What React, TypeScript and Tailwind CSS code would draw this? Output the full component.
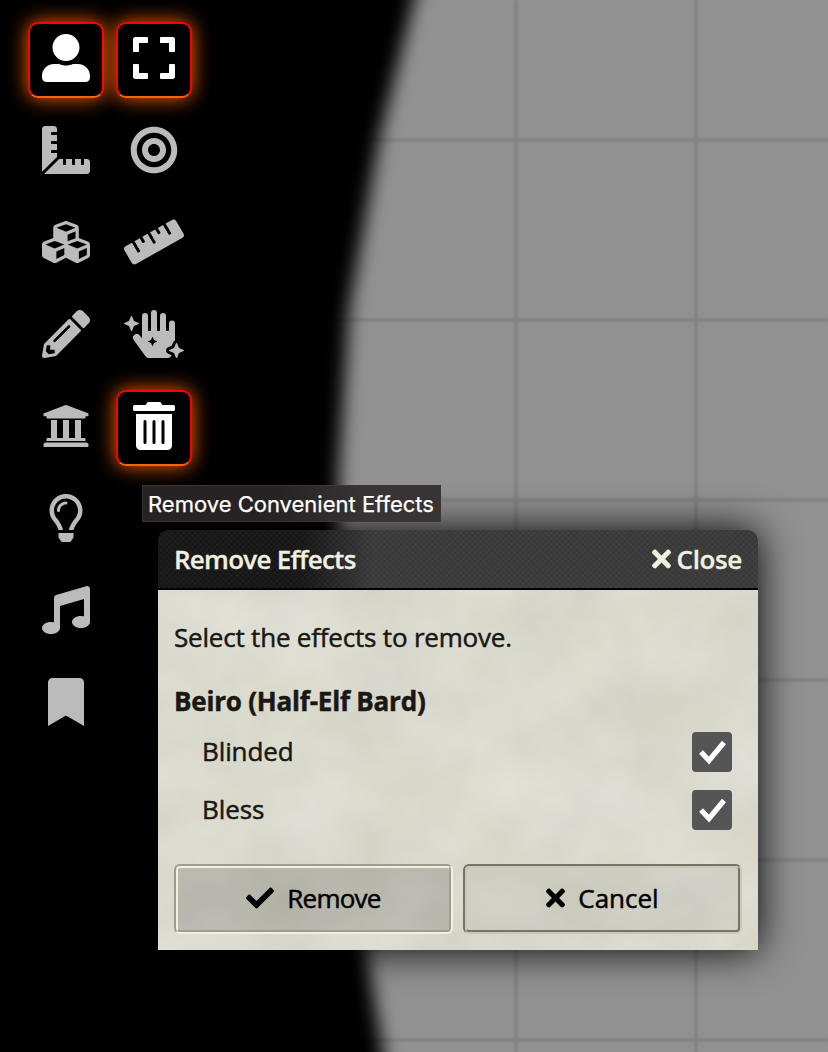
import React from "react";
import {
  FaUserAlt, FaExpand, FaRulerCombined, FaBullseye, FaCubes, FaRuler, FaPencilAlt,
  FaHandSparkles, FaUniversity, FaTrashAlt, FaRegLightbulb, FaMusic, FaBookmark,
  FaTimes, FaCheck,
} from "react-icons/fa";
import type { IconType } from "react-icons";

type Tool = { icon: IconType; label: string; active?: boolean; wide?: boolean };

const layers: Tool[] = [
  { icon: FaUserAlt, label: "Tokens", active: true },
  { icon: FaRulerCombined, label: "Measure" },
  { icon: FaCubes, label: "Tiles" },
  { icon: FaPencilAlt, label: "Drawings" },
  { icon: FaUniversity, label: "Walls" },
  { icon: FaRegLightbulb, label: "Lighting" },
  { icon: FaMusic, label: "Sounds" },
  { icon: FaBookmark, label: "Notes" },
];

const actions: Tool[] = [
  { icon: FaExpand, label: "Select", active: true },
  { icon: FaBullseye, label: "Target" },
  { icon: FaRuler, label: "Ruler", wide: true },
  { icon: FaHandSparkles, label: "Add effects", wide: true },
  { icon: FaTrashAlt, label: "Remove effects", active: true },
];

function ToolColumn({ tools }: { tools: Tool[] }) {
  return (
    <div className="flex flex-col gap-4">
      {tools.map(({ icon: Icon, label, active, wide }) => (
        <button
          key={label}
          aria-label={label}
          className={
            active
              ? "flex size-[76px] items-center justify-center rounded-[10px] border-2 border-[#ff0000] border-b-[#ff6400] bg-black pb-1 text-white shadow-[0_0_20px_#ff6400]"
              : "flex size-[76px] items-center justify-center border-2 border-transparent pb-1 text-[#bbbbbb]"
          }
        >
          <Icon className={wide ? "h-12 w-[60px] shrink-0" : "size-12 shrink-0"} />
        </button>
      ))}
    </div>
  );
}

function Scene() {
  return (
    <svg className="absolute inset-0" width="828" height="1052" viewBox="0 0 828 1052" aria-hidden="true">
      <defs>
        <filter id="soft" x="-10%" y="-10%" width="120%" height="120%">
          <feGaussianBlur stdDeviation="9" />
        </filter>
        <filter id="line" filterUnits="userSpaceOnUse" x="0" y="0" width="828" height="1052">
          <feGaussianBlur stdDeviation="0.8" />
        </filter>
      </defs>
      <rect width="828" height="1052" fill="#919191" />
      <g stroke="#000" strokeOpacity="0.11" strokeWidth="3.4" filter="url(#line)">
        <path d="M516 0V1052M696 0V1052M300 140H828M300 320H828M300 500H828M300 680H828M300 860H828M300 1040H828" />
      </g>
      <path
        d="M-60 -60H432L414 0L379 140L349 310L339 470L337 600L344 760L364 935L383 1052L396 1112H-60Z"
        fill="#000"
        filter="url(#soft)"
      />
    </svg>
  );
}

function Parchment() {
  return (
    <svg className="absolute inset-0 h-full w-full" aria-hidden="true">
      <filter id="paper" x="0" y="0" width="100%" height="100%" colorInterpolationFilters="sRGB">
        <feTurbulence type="fractalNoise" baseFrequency="0.011 0.012" numOctaves="6" seed="8" />
        <feColorMatrix values="0.08 0 0 0 0.817  0.08 0 0 0 0.813  0.09 0.03 0 0 0.748  0 0 0 0 1" />
      </filter>
      <rect width="100%" height="100%" filter="url(#paper)" />
    </svg>
  );
}

function EffectRow({ name }: { name: string }) {
  return (
    <label className="flex h-[58px] items-center justify-between pr-[10px] pl-7">
      <span className="-mt-0.5 tracking-[-0.1px]">{name}</span>
      <span className="flex size-10 items-center justify-center rounded bg-[#555555]">
        <svg width="28" height="26" viewBox="0 0 28 26" fill="none">
          <path d="M3 13L11 21.5L26 3.5" stroke="#fff" strokeWidth="5.2" />
        </svg>
      </span>
    </label>
  );
}

export default function App() {
  return (
    <main className="relative h-[1052px] w-[828px] overflow-hidden bg-black">
      <Scene />
      <nav className="relative flex gap-3 pt-[22px] pl-7">
        <ToolColumn tools={layers} />
        <ToolColumn tools={actions} />
      </nav>

      <section className="absolute top-[530px] left-[158px] flex h-[420px] w-[600px] flex-col rounded-t-[10px] font-['Open_Sans',sans-serif] text-[26px] leading-9 text-[#191813] shadow-[0_0_40px_#000] [-webkit-text-stroke:0.5px_currentColor]">
        <header className="flex h-[60px] shrink-0 items-center justify-between rounded-t-[10px] border-b-2 border-black bg-[repeating-linear-gradient(45deg,#ffffff05_0_2px,transparent_2px_4px),repeating-linear-gradient(-45deg,#ffffff05_0_2px,transparent_2px_4px),linear-gradient(90deg,#151515_0,#151515_145px,#383838_215px,#383838_100%)] px-4 font-semibold text-[#f0f0e0] [-webkit-text-stroke:0.3px_currentColor]">
          <h1 className="tracking-[-0.75px]">Remove Effects</h1>
          <button className="flex items-center gap-[6px]">
            <FaTimes className="h-7 w-[19px]" />
            <span className="tracking-[-0.35px]">Close</span>
          </button>
        </header>
        <div className="relative flex flex-1 flex-col">
          <Parchment />
          <div className="relative flex flex-1 flex-col px-4 pt-[29px]">
            <p className="tracking-[-0.2px]">Select the effects to remove.</p>
            <h2 className="mt-7 font-bold tracking-[-0.2px]">Beiro (Half-Elf Bard)</h2>
            <div className="mt-1 flex flex-col">
              <EffectRow name="Blinded" />
              <EffectRow name="Bless" />
            </div>
            <footer className="mt-[25px] flex gap-[10px] text-black">
              <button className="flex h-[70px] w-[279px] items-center justify-center gap-[13px] rounded-md border-4 border-[#f0f0e0] bg-black/15 pb-0.5 [border-style:groove]">
                <FaCheck className="size-7" />
                <span className="tracking-[-0.75px]">Remove</span>
              </button>
              <button className="flex h-[70px] w-[279px] items-center justify-center gap-[13px] rounded-md border-4 border-[#c9c7b8] bg-black/5 pb-0.5 [border-style:groove]">
                <FaTimes className="h-7 w-[19px]" />
                <span>Cancel</span>
              </button>
            </footer>
          </div>
        </div>
      </section>

      <div role="tooltip" className="absolute top-[485px] left-[142px] flex h-[37px] w-[299px] items-center border border-[#3b3738] bg-[linear-gradient(90deg,#272324,#272324_45%,#383435_75%)] pt-0.5 pl-[5px] font-['Inter',sans-serif] text-[22px] whitespace-nowrap text-white [-webkit-text-stroke:0.25px_#fff]">
        Remove Convenient Effects
      </div>
    </main>
  );
}
